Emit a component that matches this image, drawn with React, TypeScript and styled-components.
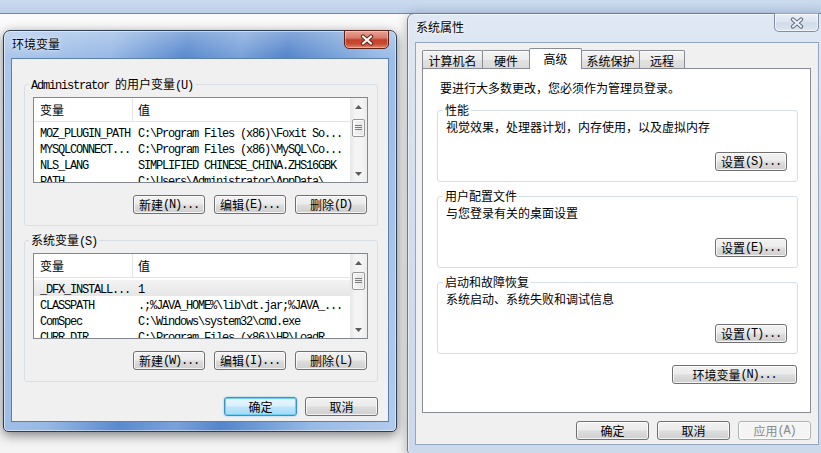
import React from "react";
import styled, { createGlobalStyle } from "styled-components";

const GlobalStyle = createGlobalStyle`
  html, body { margin: 0; padding: 0; }
  body {
    background: #f7f7f7;
    font-family: "Noto Sans CJK SC", "Noto Sans", sans-serif;
    font-size: 12px;
    color: #000;
  }
  *, *::before, *::after { box-sizing: border-box; }
`;

const Latin = styled.span`
  font-family: "Liberation Mono", "DejaVu Sans Mono", monospace;
  font-size: 12px;
  line-height: 12px;
  letter-spacing: -1.2px;
`;

function T({ children }: { children: string }) {
  const parts = children.split(/([\x00-\x7f]+)/).filter((p) => p !== "");
  return (
    <>
      {parts.map((p, i) =>
        /^[\x00-\x7f]+$/.test(p) ? (
          <Latin key={i}>{p}</Latin>
        ) : (
          <React.Fragment key={i}>{p}</React.Fragment>
        )
      )}
    </>
  );
}

const Desktop = styled.div`
  position: relative;
  width: 821px;
  height: 453px;
  overflow: hidden;
  background:
    linear-gradient(#cbdbef, #bdd0e9) 0 0 / 100% 13px no-repeat,
    linear-gradient(#80858d, #80858d) 0 13px / 100% 1px no-repeat,
    linear-gradient(#fbfbfb, #f4f4f4) 0 14px / 100% 100% no-repeat;
`;

const activeFrame = `
  linear-gradient(to bottom, rgba(255,255,255,0.28), rgba(255,255,255,0) 26px),
  linear-gradient(100deg, #adc8eb 0%, #98b9e5 24%, #5a8ace 40%, #7aa2da 52%, #5585cb 62%, #98bbe6 82%, #b2cbed 100%)
`;
const inactiveFrame = `
  linear-gradient(to bottom, #dfe8f4, #d3dfee 40%, #ccd9ea)
`;

const Win = styled.div<{ $x: number; $y: number; $w: number; $h: number; $z: number; $active?: boolean }>`
  position: absolute;
  left: ${(p) => p.$x}px;
  top: ${(p) => p.$y}px;
  width: ${(p) => p.$w}px;
  height: ${(p) => p.$h}px;
  z-index: ${(p) => p.$z};
  display: flex;
  flex-direction: column;
  padding: 0 7px 9px 7px;
  border: 1px solid ${(p) => (p.$active ? "#2c3d57" : "#6e7c8e")};
  border-radius: 7px 7px 5px 5px;
  background: ${(p) => (p.$active ? activeFrame : inactiveFrame)};
  box-shadow: inset 0 0 0 1px rgba(255, 255, 255, 0.5),
    0 3px 12px rgba(0, 0, 0, ${(p) => (p.$active ? 0.5 : 0.3)});
`;

const TitleBar = styled.div<{ $h: number }>`
  height: ${(p) => p.$h}px;
  flex: none;
  display: flex;
  align-items: flex-start;
  justify-content: space-between;
`;

const TitleText = styled.div`
  padding: 6px 0 0 1px;
  line-height: 14px;
  font-size: 12px;
  color: #000;
  text-shadow: 0 0 6px rgba(255, 255, 255, 0.9), 0 0 2px rgba(255, 255, 255, 0.8);
`;

const CloseBtn = styled.div<{ $active?: boolean }>`
  width: 45px;
  height: 19px;
  margin-top: -1px;
  display: flex;
  align-items: center;
  justify-content: center;
  border: 1px solid ${(p) => (p.$active ? "#5b2119" : "#7f8ea3")};
  border-top-color: ${(p) => (p.$active ? "#5b2119" : "#9aa8ba")};
  border-radius: 0 0 5px 5px;
  background: ${(p) =>
    p.$active
      ? "linear-gradient(#e8a295 0%, #d97b6a 40%, #c2412b 52%, #c94a33 75%, #e0876b 100%)"
      : "linear-gradient(#e9eff7 0%, #dae4f0 48%, #cfdbea 52%, #dde6f1 100%)"};
  box-shadow: inset 0 0 0 1px rgba(255, 255, 255, ${(p) => (p.$active ? 0.35 : 0.6)});
`;

function CloseX({ active }: { active?: boolean }) {
  return (
    <svg width="14" height="12" viewBox="0 0 14 12">
      <path
        d="M3 2.5 L11 9.5 M11 2.5 L3 9.5"
        stroke={active ? "#6a2418" : "#5f6d80"}
        strokeWidth="4.2"
        strokeLinecap="round"
        fill="none"
      />
      <path
        d="M3 2.5 L11 9.5 M11 2.5 L3 9.5"
        stroke={active ? "#ffffff" : "#eef2f7"}
        strokeWidth="2.2"
        strokeLinecap="round"
        fill="none"
      />
    </svg>
  );
}

const Client = styled.div<{ $pad: string; $active?: boolean }>`
  flex: 1;
  min-height: 0;
  display: flex;
  flex-direction: column;
  padding: ${(p) => p.$pad};
  background: #f0f0f0;
  border: 1px solid ${(p) => (p.$active ? "#5c7fae" : "#94a6bd")};
`;

const Group = styled.fieldset<{ $pad: string; $mt?: number }>`
  margin: ${(p) => p.$mt ?? 0}px 0 0 0;
  min-width: 0;
  padding: ${(p) => p.$pad};
  border: 1px solid #d5dfe5;
  border-radius: 3px;
  display: flex;
  flex-direction: column;
  flex: none;
`;

const Legend = styled.legend<{ $ml: number }>`
  margin-left: ${(p) => p.$ml}px;
  padding: 0 2px;
  height: 16px;
  line-height: 16px;
  font-size: 12px;
  color: #000;
`;

const ButtonRow = styled.div<{ $mt: number; $gap: number; $pr?: number }>`
  display: flex;
  justify-content: flex-end;
  gap: ${(p) => p.$gap}px;
  margin-top: ${(p) => p.$mt}px;
  padding-right: ${(p) => p.$pr ?? 0}px;
  flex: none;
`;

const Btn = styled.div<{ $w: number; $kind?: "default" | "disabled" }>`
  width: ${(p) => p.$w}px;
  height: 19px;
  display: flex;
  align-items: center;
  justify-content: center;
  font-size: 12px;
  line-height: 17px;
  white-space: nowrap;
  color: ${(p) => (p.$kind === "disabled" ? "#8a8a8a" : "#000")};
  border: 1px solid
    ${(p) => (p.$kind === "default" ? "#3c8fc7" : p.$kind === "disabled" ? "#adb2b5" : "#707070")};
  border-radius: 3px;
  background: ${(p) =>
    p.$kind === "default"
      ? "linear-gradient(#eaf6fd 0%, #d9f0fc 48%, #bee6fd 52%, #a7d9f5 100%)"
      : p.$kind === "disabled"
      ? "#f4f4f4"
      : "linear-gradient(#f2f2f2 0%, #ebebeb 48%, #dddddd 52%, #cfcfcf 100%)"};
  box-shadow: ${(p) =>
    p.$kind === "default"
      ? "inset 0 0 0 1px #6fd0f5, 0 0 2px rgba(60, 160, 220, 0.6)"
      : "inset 0 0 0 1px rgba(255, 255, 255, 0.75)"};
`;

/* ---------- list view ---------- */

const ListBox = styled.div`
  height: 86px;
  flex: none;
  display: flex;
  border: 1px solid #828790;
  background: #fff;
`;

const ListMain = styled.div`
  flex: 1;
  min-width: 0;
  overflow: hidden;
  display: flex;
  flex-direction: column;
`;

const HeaderRow = styled.div`
  height: 24px;
  flex: none;
  display: grid;
  grid-template-columns: 99px 1fr;
  border-bottom: 1px solid #e3e3e3;
`;

const HeadCell = styled.div<{ $first?: boolean }>`
  padding-left: ${(p) => (p.$first ? 6 : 5)}px;
  line-height: 24px;
  font-size: 12px;
  border-right: ${(p) => (p.$first ? "1px solid #e5e5e5" : "none")};
`;

const RowArea = styled.div`
  padding-top: 2px;
  display: flex;
  flex-direction: column;
`;

const ListRow = styled.div<{ $sel?: boolean }>`
  height: 16px;
  flex: none;
  display: grid;
  grid-template-columns: 99px 1fr;
  line-height: 16px;
  white-space: nowrap;
  background: ${(p) => (p.$sel ? "linear-gradient(#f3f3f3, #e6e6e6)" : "transparent")};
`;

const Cell = styled.div<{ $first?: boolean }>`
  padding-left: ${(p) => (p.$first ? 6 : 5)}px;
  overflow: hidden;
`;

const VScroll = styled.div`
  width: 17px;
  flex: none;
  display: flex;
  flex-direction: column;
  background: linear-gradient(to right, #e6e6e6, #f4f4f4 30%, #f4f4f4 70%, #ebebeb);
`;

const ScrollArrow = styled.div`
  height: 17px;
  flex: none;
  display: flex;
  align-items: center;
  justify-content: center;
`;

const ScrollTrack = styled.div`
  flex: 1;
  display: flex;
  flex-direction: column;
  padding: 0 2px;
`;

const Thumb = styled.div<{ $top: number }>`
  margin-top: ${(p) => p.$top}px;
  height: 18px;
  border: 1px solid #979797;
  border-radius: 2px;
  background: linear-gradient(to right, #f6f6f6, #e3e3e3);
  box-shadow: inset 0 0 0 1px rgba(255, 255, 255, 0.8);
  display: flex;
  align-items: center;
  justify-content: center;
`;

function Arrow({ up }: { up?: boolean }) {
  return (
    <svg width="7" height="4" viewBox="0 0 7 4">
      <path d={up ? "M0 4 L3.5 0 L7 4 Z" : "M0 0 L3.5 4 L7 0 Z"} fill="#5c5c5c" />
    </svg>
  );
}

function Grip() {
  return (
    <svg width="7" height="6" viewBox="0 0 7 6">
      <path d="M0 0.5 H7 M0 2.5 H7 M0 4.5 H7" stroke="#7a7a7a" strokeWidth="1" />
    </svg>
  );
}

type Row = [string, string];

function ListView({ rows, thumbTop, selected }: { rows: Row[]; thumbTop: number; selected?: number }) {
  return (
    <ListBox>
      <ListMain>
        <HeaderRow>
          <HeadCell $first>变量</HeadCell>
          <HeadCell>值</HeadCell>
        </HeaderRow>
        <RowArea>
          {rows.map(([k, v], i) => (
            <ListRow key={i} $sel={i === selected}>
              <Cell $first>
                <T>{k}</T>
              </Cell>
              <Cell>
                <T>{v}</T>
              </Cell>
            </ListRow>
          ))}
        </RowArea>
      </ListMain>
      <VScroll>
        <ScrollArrow>
          <Arrow up />
        </ScrollArrow>
        <ScrollTrack>
          <Thumb $top={thumbTop}>
            <Grip />
          </Thumb>
        </ScrollTrack>
        <ScrollArrow>
          <Arrow />
        </ScrollArrow>
      </VScroll>
    </ListBox>
  );
}

/* ---------- tabs ---------- */

const TabStrip = styled.div`
  height: 20px;
  flex: none;
  display: flex;
  align-items: flex-end;
  position: relative;
  z-index: 1;
`;

const Tab = styled.div<{ $w: number; $sel?: boolean }>`
  width: ${(p) => p.$w}px;
  height: ${(p) => (p.$sel ? 21 : 18)}px;
  margin-bottom: ${(p) => (p.$sel ? -1 : 0)}px;
  margin-left: -1px;
  &:first-child { margin-left: 0; }
  padding-top: 1px;
  line-height: 17px;
  text-align: center;
  font-size: 12px;
  border: 1px solid #898c95;
  border-bottom: none;
  border-radius: 2px 2px 0 0;
  position: relative;
  z-index: ${(p) => (p.$sel ? 2 : 1)};
  background: ${(p) =>
    p.$sel ? "#ffffff" : "linear-gradient(#f4f4f4 0%, #ececec 50%, #e2e2e2 51%, #dadada 100%)"};
  box-shadow: inset 0 1px 0 rgba(255, 255, 255, 0.9);
`;

const TabPanel = styled.div`
  height: 345px;
  flex: none;
  display: flex;
  flex-direction: column;
  padding: 11px 12px 0 14px;
  background: #fff;
  border: 1px solid #898c95;
`;

const Intro = styled.div`
  padding-left: 3px;
  line-height: 16px;
  margin-bottom: 6px;
`;

const Desc = styled.div`
  line-height: 16px;
`;

/* ---------- data ---------- */

const userRows: Row[] = [
  ["MOZ_PLUGIN_PATH", String.raw`C:\Program Files (x86)\Foxit So...`],
  ["MYSQLCONNECT...", String.raw`C:\Program Files (x86)\MySQL\Co...`],
  ["NLS_LANG", "SIMPLIFIED CHINESE_CHINA.ZHS16GBK"],
  ["PATH", String.raw`C:\Users\Administrator\AppData\...`],
];

const sysRows: Row[] = [
  ["_DFX_INSTALL...", "1"],
  ["CLASSPATH", String.raw`.;%JAVA_HOME%\lib\dt.jar;%JAVA_...`],
  ["ComSpec", String.raw`C:\Windows\system32\cmd.exe`],
  ["CURR_DIR", String.raw`C:\Program Files (x86)\HP\LoadR...`],
];

const sections = [
  { title: "性能", desc: "视觉效果，处理器计划，内存使用，以及虚拟内存", btn: "设置(S)..." },
  { title: "用户配置文件", desc: "与您登录有关的桌面设置", btn: "设置(E)..." },
  { title: "启动和故障恢复", desc: "系统启动、系统失败和调试信息", btn: "设置(T)..." },
];

const tabs = [
  { label: "计算机名", w: 61 },
  { label: "硬件", w: 48 },
  { label: "高级", w: 53, sel: true },
  { label: "系统保护", w: 59 },
  { label: "远程", w: 46 },
];

export default function App() {
  return (
    <>
      <GlobalStyle />
      <Desktop>
        {/* 系统属性 (inactive) */}
        <Win $x={407} $y={13} $w={420} $h={442} $z={1}>
          <TitleBar $h={28}>
            <TitleText>系统属性</TitleText>
            <CloseBtn>
              <CloseX />
            </CloseBtn>
          </TitleBar>
          <Client $pad="5px 7px 0 6px">
            <TabStrip>
              {tabs.map((t) => (
                <Tab key={t.label} $w={t.w} $sel={t.sel}>
                  {t.label}
                </Tab>
              ))}
            </TabStrip>
            <TabPanel>
              <Intro>要进行大多数更改，您必须作为管理员登录。</Intro>
              {sections.map((s, i) => (
                <Group key={s.title} $pad="1px 10px 10px 8px" $mt={i === 0 ? 0 : 6}>
                  <Legend $ml={-3}>{s.title}</Legend>
                  <Desc>{s.desc}</Desc>
                  <ButtonRow $mt={17} $gap={0}>
                    <Btn $w={72}>
                      <T>{s.btn}</T>
                    </Btn>
                  </ButtonRow>
                </Group>
              ))}
              <ButtonRow $mt={11} $gap={0} $pr={1}>
                <Btn $w={125}>
                  <T>环境变量(N)...</T>
                </Btn>
              </ButtonRow>
            </TabPanel>
            <ButtonRow $mt={8} $gap={8}>
              <Btn $w={73}>确定</Btn>
              <Btn $w={73}>取消</Btn>
              <Btn $w={73} $kind="disabled">
                <T>应用(A)</T>
              </Btn>
            </ButtonRow>
          </Client>
        </Win>

        {/* 环境变量 (active) */}
        <Win $x={3} $y={30} $w={394} $h={402} $z={2} $active>
          <TitleBar $h={27}>
            <TitleText>环境变量</TitleText>
            <CloseBtn $active>
              <CloseX active />
            </CloseBtn>
          </TitleBar>
          <Client $pad="17px 10px 0 12px" $active>
            <Group $pad="5px 9px 11px 8px">
              <Legend $ml={-4}>
                <T>Administrator 的用户变量(U)</T>
              </Legend>
              <ListView rows={userRows} thumbTop={4} />
              <ButtonRow $mt={12} $gap={9} $pr={1}>
                <Btn $w={72}>
                  <T>新建(N)...</T>
                </Btn>
                <Btn $w={72}>
                  <T>编辑(E)...</T>
                </Btn>
                <Btn $w={72}>
                  <T>删除(D)</T>
                </Btn>
              </ButtonRow>
            </Group>
            <Group $pad="5px 9px 11px 8px" $mt={6}>
              <Legend $ml={-4}>
                <T>系统变量(S)</T>
              </Legend>
              <ListView rows={sysRows} thumbTop={1} selected={0} />
              <ButtonRow $mt={12} $gap={9} $pr={1}>
                <Btn $w={72}>
                  <T>新建(W)...</T>
                </Btn>
                <Btn $w={72}>
                  <T>编辑(I)...</T>
                </Btn>
                <Btn $w={72}>
                  <T>删除(L)</T>
                </Btn>
              </ButtonRow>
            </Group>
            <ButtonRow $mt={15} $gap={8}>
              <Btn $w={73} $kind="default">
                确定
              </Btn>
              <Btn $w={73}>取消</Btn>
            </ButtonRow>
          </Client>
        </Win>
      </Desktop>
    </>
  );
}
